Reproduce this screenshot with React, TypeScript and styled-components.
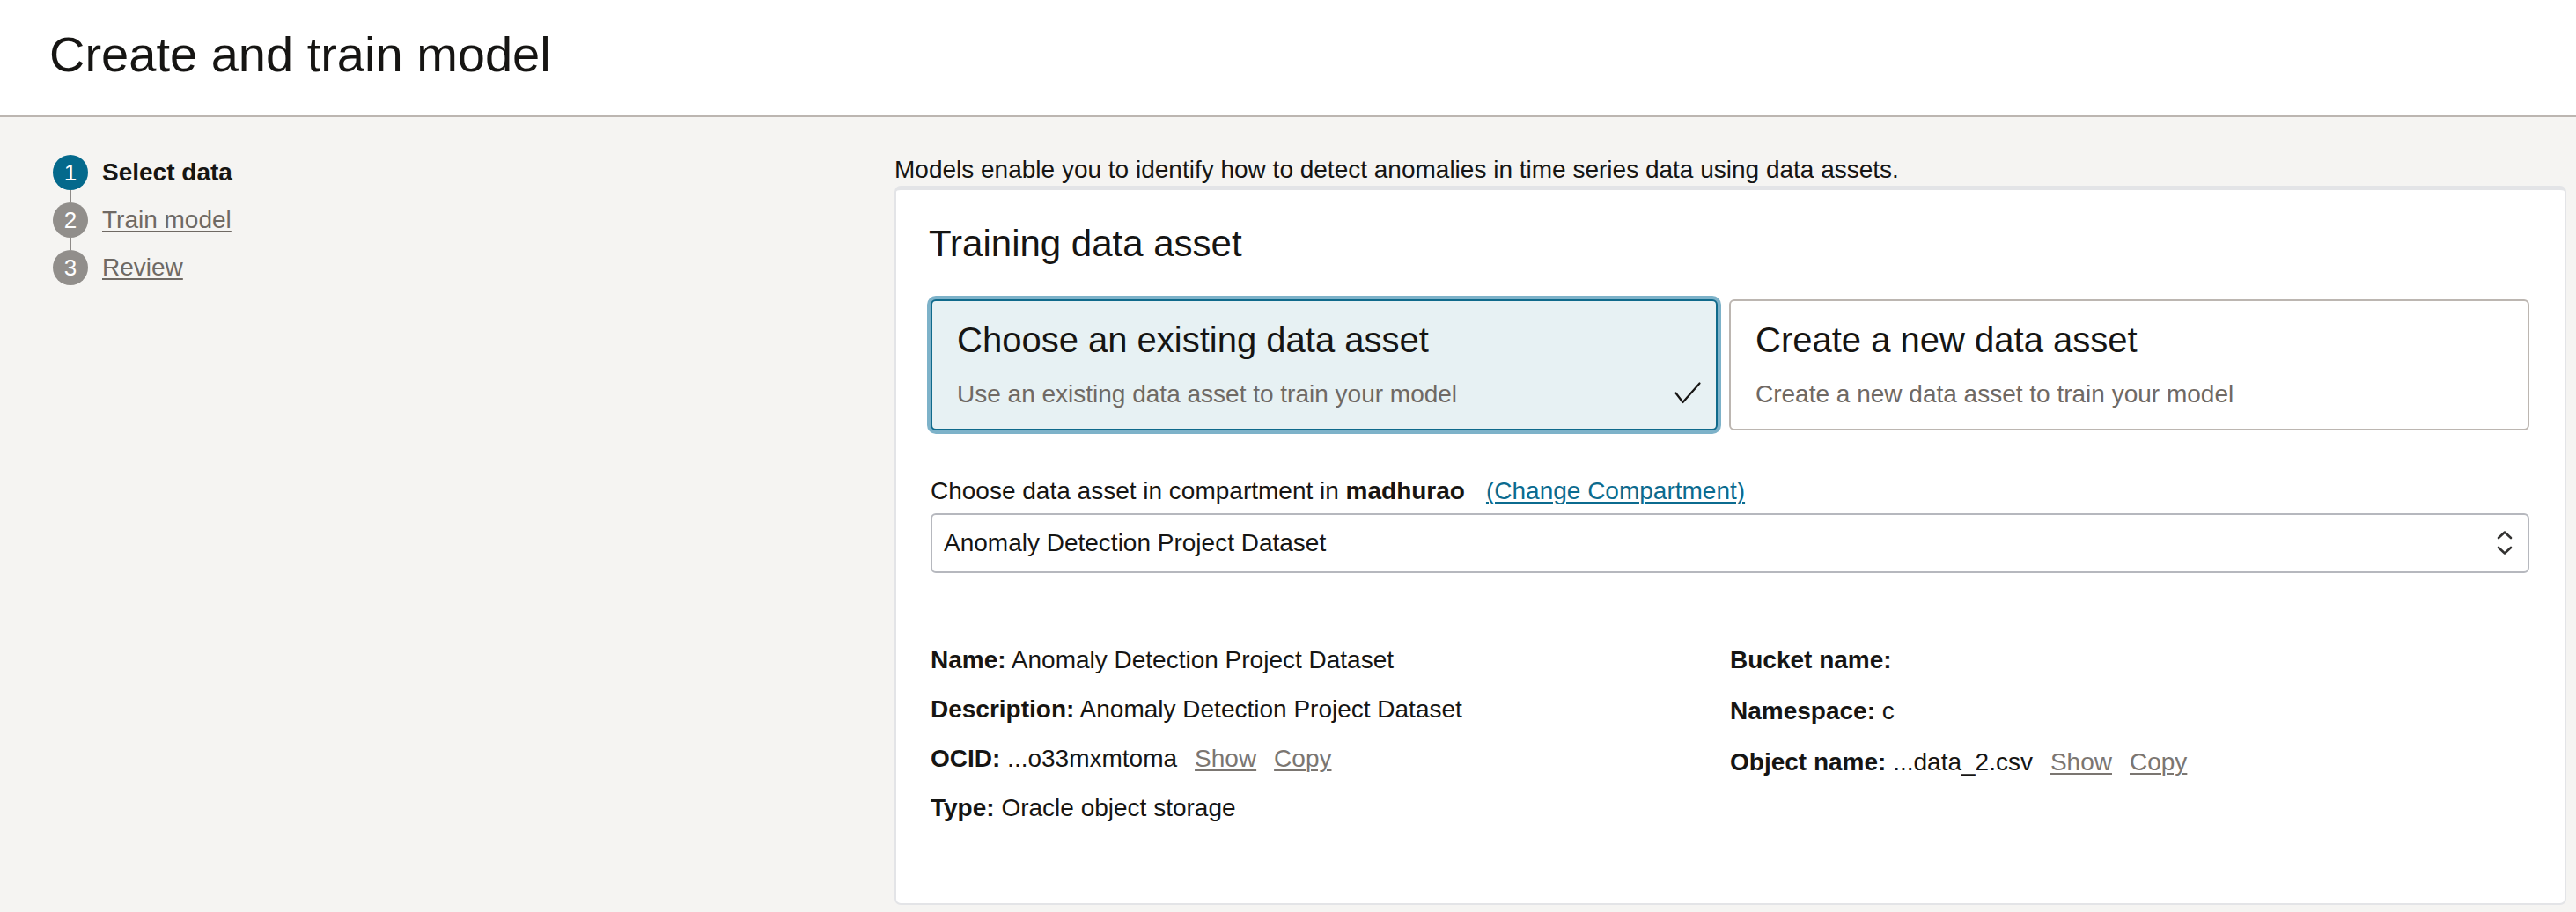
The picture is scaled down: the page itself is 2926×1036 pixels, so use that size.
import React from "react";
import styled, { createGlobalStyle } from "styled-components";

const GlobalStyle = createGlobalStyle`
  html, body {
    margin: 0;
    padding: 0;
    background: #f5f4f2;
    font-family: "Liberation Sans", Arial, Helvetica, sans-serif;
    color: #161513;
  }
  * { box-sizing: border-box; }
`;

const Page = styled.div`
  width: 2926px;
  height: 1036px;
  overflow: hidden;
  background: #f5f4f2;
`;

const Header = styled.header`
  height: 133px;
  padding: 30px 0 0 56px;
  background: #ffffff;
  border-bottom: 2px solid #bcb6b1;
`;

const Title = styled.h1`
  margin: 0;
  font-size: 56px;
  line-height: 64px;
  font-weight: 400;
  color: #161513;
`;

const Body = styled.div`
  display: flex;
  align-items: flex-start;
`;

const Sidebar = styled.nav`
  width: 1016px;
  flex: none;
  padding: 43px 0 0 60px;
`;

const StepList = styled.div`
  display: flex;
  flex-direction: column;
`;

const Step = styled.div`
  display: flex;
  align-items: center;
  gap: 16px;
  height: 40px;
`;

const StepCircle = styled.span<{ $active?: boolean }>`
  width: 40px;
  height: 40px;
  flex: none;
  border-radius: 50%;
  background: ${(p) => (p.$active ? "#04698c" : "#918e8b")};
  color: #ffffff;
  font-size: 26px;
  display: flex;
  align-items: center;
  justify-content: center;
`;

const StepLabel = styled.a<{ $active?: boolean }>`
  font-size: 28px;
  line-height: 32px;
  font-weight: ${(p) => (p.$active ? 700 : 400)};
  color: ${(p) => (p.$active ? "#161513" : "#6f6964")};
  text-decoration: ${(p) => (p.$active ? "none" : "underline")};
  text-underline-offset: 3px;
  text-decoration-thickness: 2px;
`;

const Connector = styled.div`
  width: 2px;
  height: 14px;
  margin-left: 19px;
  background: #8e8a87;
`;

const Main = styled.main`
  flex: 1;
  padding: 44px 11px 0 0;
`;

const Intro = styled.p`
  margin: 0 0 2px 0;
  font-size: 28px;
  line-height: 32px;
  color: #161513;
`;

const Card = styled.section`
  background: #ffffff;
  border: 2px solid #e3e4e7;
  border-top-width: 5px;
  border-radius: 7px;
  padding: 37px 40px 88px 37px;
`;

const CardHeading = styled.h2`
  margin: 0 0 39px;
  font-size: 42px;
  line-height: 48px;
  font-weight: 400;
  color: #161513;
`;

const TileGrid = styled.div`
  display: grid;
  grid-template-columns: 1fr 1fr;
`;

const Tile = styled.div<{ $selected?: boolean }>`
  position: relative;
  height: 149px;
  padding: 21px 30px 23px 28px;
  border-radius: 6px;
  border: 2px solid ${(p) => (p.$selected ? "#0f6a8b" : "#bcb6b1")};
  background: ${(p) => (p.$selected ? "#e7f1f3" : "#ffffff")};
  box-shadow: ${(p) => (p.$selected ? "0 0 0 4px #7db2c9" : "none")};
  margin-right: ${(p) => (p.$selected ? "13px" : "0")};
  margin-left: ${(p) => (p.$selected ? "2px" : "0")};
`;

const TileTitle = styled.div`
  font-size: 40px;
  line-height: 46px;
  color: #161513;
  margin-bottom: 23px;
`;

const TileText = styled.div`
  font-size: 28px;
  line-height: 32px;
  color: #6f6964;
`;

const Check = styled.svg`
  position: absolute;
  right: 17px;
  bottom: 28px;
`;

const FieldLabel = styled.div`
  margin: 53px 0 9px 2px;
  font-size: 28px;
  line-height: 32px;
  color: #161513;
`;

const Strong = styled.b`
  font-weight: 700;
`;

const ChangeLink = styled.a`
  margin-left: 24px;
  color: #0b6b8f;
  text-decoration: underline;
  text-underline-offset: 3px;
  text-decoration-thickness: 2px;
`;

const Select = styled.div`
  height: 68px;
  margin-left: 2px;
  border: 2px solid #b6b8be;
  border-radius: 6px;
  padding: 0 16px 0 13px;
  display: flex;
  align-items: center;
  justify-content: space-between;
  font-size: 28px;
  color: #161513;
  background: #ffffff;
`;

const DetailGrid = styled.div`
  margin-top: 79px;
  margin-left: 2px;
  display: grid;
  grid-template-columns: 908px 1fr;
`;

const DetailCol = styled.div<{ $loose?: boolean }>`
  display: flex;
  flex-direction: column;
  gap: ${(p) => (p.$loose ? "18px" : "16px")};
`;

const DetailRow = styled.div`
  font-size: 28px;
  line-height: 40px;
  color: #161513;
  white-space: nowrap;
`;

const ActionLink = styled.a`
  margin-left: 20px;
  color: #7b7671;
  text-decoration: underline;
  text-underline-offset: 3px;
  text-decoration-thickness: 2px;
`;

const steps = [
  { n: 1, label: "Select data", active: true },
  { n: 2, label: "Train model" },
  { n: 3, label: "Review" },
];

export default function App() {
  return (
    <Page>
      <GlobalStyle />
      <Header>
        <Title>Create and train model</Title>
      </Header>
      <Body>
        <Sidebar>
          <StepList>
            {steps.map((s, i) => (
              <React.Fragment key={s.n}>
                {i > 0 && <Connector />}
                <Step>
                  <StepCircle $active={s.active}>{s.n}</StepCircle>
                  <StepLabel $active={s.active}>{s.label}</StepLabel>
                </Step>
              </React.Fragment>
            ))}
          </StepList>
        </Sidebar>
        <Main>
          <Intro>
            Models enable you to identify how to detect anomalies in time series data using data assets.
          </Intro>
          <Card>
            <CardHeading>Training data asset</CardHeading>
            <TileGrid>
              <Tile $selected>
                <TileTitle>Choose an existing data asset</TileTitle>
                <TileText>Use an existing data asset to train your model</TileText>
                <Check width="30" height="25" viewBox="0 0 30 25" fill="none">
                  <path d="M1.5 12.5 L9.5 23 L28.5 1.5" stroke="#161513" strokeWidth="2.2" strokeLinecap="round" strokeLinejoin="round" />
                </Check>
              </Tile>
              <Tile>
                <TileTitle>Create a new data asset</TileTitle>
                <TileText>Create a new data asset to train your model</TileText>
              </Tile>
            </TileGrid>
            <FieldLabel>
              Choose data asset in compartment in <Strong>madhurao</Strong>
              <ChangeLink>(Change Compartment)</ChangeLink>
            </FieldLabel>
            <Select>
              <span>Anomaly Detection Project Dataset</span>
              <svg width="20" height="32" viewBox="0 0 20 32" fill="none">
                <path d="M3 10 L10 3.5 L17 10" stroke="#333231" strokeWidth="2.6" strokeLinecap="round" strokeLinejoin="round" />
                <path d="M3 21 L10 27.5 L17 21" stroke="#333231" strokeWidth="2.6" strokeLinecap="round" strokeLinejoin="round" />
              </svg>
            </Select>
            <DetailGrid>
              <DetailCol>
                <DetailRow><Strong>Name:</Strong> Anomaly Detection Project Dataset</DetailRow>
                <DetailRow><Strong>Description:</Strong> Anomaly Detection Project Dataset</DetailRow>
                <DetailRow>
                  <Strong>OCID:</Strong> ...o33mxmtoma
                  <ActionLink>Show</ActionLink>
                  <ActionLink>Copy</ActionLink>
                </DetailRow>
                <DetailRow><Strong>Type:</Strong> Oracle object storage</DetailRow>
              </DetailCol>
              <DetailCol $loose>
                <DetailRow><Strong>Bucket name:</Strong></DetailRow>
                <DetailRow><Strong>Namespace:</Strong> c</DetailRow>
                <DetailRow>
                  <Strong>Object name:</Strong> ...data_2.csv
                  <ActionLink>Show</ActionLink>
                  <ActionLink>Copy</ActionLink>
                </DetailRow>
              </DetailCol>
            </DetailGrid>
          </Card>
        </Main>
      </Body>
    </Page>
  );
}
